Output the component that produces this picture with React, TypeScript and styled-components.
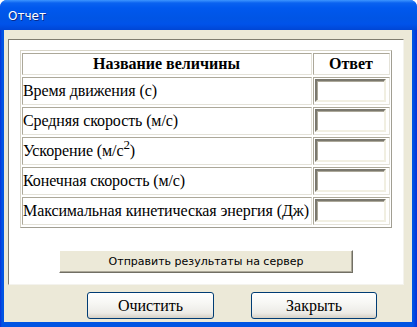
import styled, { createGlobalStyle } from "styled-components";

const GlobalStyle = createGlobalStyle`
  html, body {
    margin: 0;
    padding: 0;
    background: #ffffff;
  }
  * {
    box-sizing: border-box;
  }
`;

const App = () => {
  const filas = [
    { id: "tiempo", texto: <>Время движения (с)</> },
    { id: "media", texto: <>Средняя скорость (м/с)</> },
    {
      id: "aceleracion",
      texto: (
        <>
          Ускорение (м/с<Sup>2</Sup>)
        </>
      ),
    },
    { id: "final", texto: <>Конечная скорость (м/с)</> },
    { id: "energia", texto: <>Максимальная кинетическая энергия (Дж)</> },
  ];

  return (
    <>
      <GlobalStyle />
      <Ventana>
        <BarraTitulo>Отчет</BarraTitulo>
        <AreaCliente>
          <Panel>
            <Tabla>
              <tbody>
                <tr>
                  <CeldaCabecera>Название величины</CeldaCabecera>
                  <CeldaCabecera $ancho={77}>Ответ</CeldaCabecera>
                </tr>
                {filas.map((fila) => (
                  <tr key={fila.id}>
                    <CeldaTexto>{fila.texto}</CeldaTexto>
                    <CeldaInput>
                      <CampoRespuesta type="text" />
                    </CeldaInput>
                  </tr>
                ))}
              </tbody>
            </Tabla>
            <BotonEnviar type="button">Отправить результаты на сервер</BotonEnviar>
          </Panel>
          <FilaBotones>
            <BotonXP type="button">Очистить</BotonXP>
            <BotonXP type="button" $ancho={126}>
              Закрыть
            </BotonXP>
          </FilaBotones>
        </AreaCliente>
      </Ventana>
    </>
  );
};

export default App;

const Ventana = styled.div`
  width: 417px;
  height: 327px;
  display: flex;
  flex-direction: column;
  background: linear-gradient(to right, #0831d9 0px, #0054e3 2px, #0054e3 413px, #0831d9 417px);
  border-radius: 7px 7px 0 0;
  overflow: hidden;
`;

const BarraTitulo = styled.div`
  height: 30px;
  flex: none;
  display: flex;
  align-items: center;
  padding: 1px 0 0 8px;
  background: linear-gradient(
    to bottom,
    #3d95ff 0px,
    #0a62f0 3px,
    #0058ee 8px,
    #0055e5 18px,
    #0053ea 24px,
    #0046d5 30px
  );
  color: #ffffff;
  font-family: "DejaVu Sans", "Liberation Sans", sans-serif;
  font-size: 12px;
  text-shadow: 1px 1px 0 #0a2a8a;
`;

const AreaCliente = styled.div`
  height: 292px;
  margin: 0 5px 5px 4px;
  background: #ece9d8;
  padding: 9px 8px 0 4px;
  display: flex;
  flex-direction: column;
`;

const Panel = styled.div`
  height: 246px;
  flex: none;
  background: #ffffff;
  border: 1px solid;
  border-color: #7f7c70 #f4f3ee #f4f3ee #7f7c70;
  padding: 10px 0 0 11px;
  display: flex;
  flex-direction: column;
`;

const Tabla = styled.table`
  width: 372px;
  table-layout: fixed;
  border-collapse: separate;
  border-spacing: 1px 2px;
  border: 1px solid;
  border-color: #d8d5c8 #a19e92 #a19e92 #d8d5c8;
  font-family: "Liberation Serif", "Times New Roman", serif;
  font-size: 16px;
  color: #000000;
`;

const Celda = styled.td<{ $ancho?: number }>`
  border: 1px solid;
  border-color: #aca899 #e4e2d8 #e4e2d8 #aca899;
  padding: 1px 1px 1px 0;
  width: ${(p) => (p.$ancho ? `${p.$ancho}px` : "auto")};
`;

const CeldaCabecera = styled(Celda).attrs({ as: "th" })`
  height: 22px;
  font-weight: bold;
  text-align: center;
  vertical-align: middle;
  line-height: 18px;
`;

const CeldaTexto = styled(Celda)`
  height: 28px;
  vertical-align: middle;
  line-height: 18px;
  white-space: nowrap;
  letter-spacing: -0.1px;
  overflow: visible;
`;

const CeldaInput = styled(Celda)`
  height: 28px;
  padding: 1px;
  vertical-align: top;
`;

const Sup = styled.sup`
  font-size: 13px;
  line-height: 0;
  vertical-align: 7px;
`;

const CampoRespuesta = styled.input`
  display: block;
  width: 71px;
  height: 23px;
  margin: 0;
  padding: 1px 2px;
  border: 2px solid;
  border-color: #7a786e #f1efe2 #f1efe2 #7a786e;
  box-shadow: inset 1px 1px 0 #aca899;
  background: #ffffff;
  font-family: "Liberation Sans", sans-serif;
  font-size: 13px;
  outline: none;
`;

const BotonEnviar = styled.button`
  align-self: center;
  margin: 22px 0 0 -11px;
  width: 294px;
  height: 23px;
  padding: 0;
  background: #ece9d8;
  border: 1px solid;
  border-color: #ffffff #716f64 #716f64 #ffffff;
  box-shadow: inset -1px -1px 0 #aca899;
  font-family: "DejaVu Sans", "Liberation Sans", sans-serif;
  font-size: 11px;
  color: #000000;
  cursor: pointer;
`;

const FilaBotones = styled.div`
  display: flex;
  gap: 37px;
  margin-top: 7px;
  padding-left: 79px;
`;

const BotonXP = styled.button<{ $ancho?: number }>`
  width: ${(p) => p.$ancho ?? 127}px;
  height: 27px;
  padding: 0;
  border: 1px solid #003c74;
  border-radius: 3px;
  background: linear-gradient(
    to bottom,
    #ffffff 0%,
    #f7f7f4 40%,
    #ecebe6 80%,
    #d6d0c5 100%
  );
  font-family: "Liberation Serif", "Times New Roman", serif;
  font-size: 16px;
  color: #000000;
  cursor: pointer;
`;
